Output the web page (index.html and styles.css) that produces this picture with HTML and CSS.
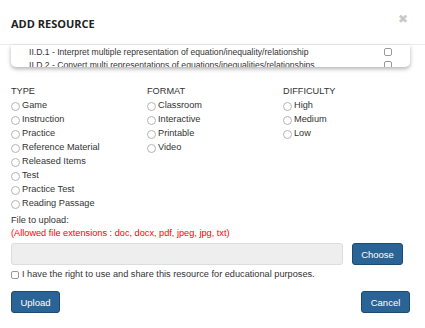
FILE: index.html
```html
<!DOCTYPE html>
<html>

<head>
    <link rel="stylesheet" href="styles.css">
</head>

<body>
    <div class="modal">
        <div class="modal-header">
            <span class="title">ADD RESOURCE</span>
            <span class="close">&#x2716;</span>
        </div>

        <div class="standards">
            <div class="std-row">
                <span>II.D.1 - Interpret multiple representation of equation/inequality/relationship</span>
                <input type="checkbox" class="box">
            </div>
            <div class="std-row">
                <span>II.D.2 - Convert multi representations of equations/inequalities/relationships</span>
                <input type="checkbox" class="box">
            </div>
        </div>

        <div class="options">
            <div class="col">
                <div class="col-title">TYPE</div>
                <label class="opt"><input type="radio" name="type">Game</label>
                <label class="opt"><input type="radio" name="type">Instruction</label>
                <label class="opt"><input type="radio" name="type">Practice</label>
                <label class="opt"><input type="radio" name="type">Reference Material</label>
                <label class="opt"><input type="radio" name="type">Released Items</label>
                <label class="opt"><input type="radio" name="type">Test</label>
                <label class="opt"><input type="radio" name="type">Practice Test</label>
                <label class="opt"><input type="radio" name="type">Reading Passage</label>
            </div>
            <div class="col">
                <div class="col-title">FORMAT</div>
                <label class="opt"><input type="radio" name="format">Classroom</label>
                <label class="opt"><input type="radio" name="format">Interactive</label>
                <label class="opt"><input type="radio" name="format">Printable</label>
                <label class="opt"><input type="radio" name="format">Video</label>
            </div>
            <div class="col">
                <div class="col-title">DIFFICULTY</div>
                <label class="opt"><input type="radio" name="level">High</label>
                <label class="opt"><input type="radio" name="level">Medium</label>
                <label class="opt"><input type="radio" name="level">Low</label>
            </div>
        </div>

        <div class="upload">
            <div class="line">File to upload:</div>
            <div class="line allowed">(Allowed file extensions : doc, docx, pdf, jpeg, jpg, txt)</div>
            <div class="file-row">
                <div class="file-box"></div>
                <button class="button choose">Choose</button>
            </div>
            <label class="rights"><input type="checkbox" class="box">I have the right to use and share this resource for educational purposes.</label>
        </div>

        <div class="footer">
            <button class="button">Upload</button>
            <button class="button">Cancel</button>
        </div>
    </div>
</body>

</html>
```

FILE: styles.css
```css
body {
    margin: 0;
    background: #fff;
    font-family: "Liberation Sans", Arial, sans-serif;
    font-size: 9.2px;
    color: #333;
}

.modal {
    width: 425px;
    height: 328px;
}

.modal-header {
    height: 44px;
    border-bottom: 1px solid #ececec;
    display: flex;
    align-items: center;
    justify-content: space-between;
    padding: 0 17px 0 11px;
}

.title {
    font-family: "Open Sans", sans-serif;
    font-weight: bold;
    font-size: 11px;
    color: #222;
    margin-top: 3px;
}

.close {
    color: #c8c8c8;
    font-size: 12px;
    margin-top: -7px;
}

/* standards list, scrolled */
.standards {
    margin: 0 15px 0 11px;
    height: 22px;
    overflow: hidden;
    border-radius: 0 0 5px 5px;
    box-shadow: 0 2px 4px rgba(0, 0, 0, 0.3);
    padding: 0 18px;
    font-size: 8.6px;
}

.std-row {
    height: 12px;
    display: flex;
    align-items: center;
    justify-content: space-between;
    margin-top: 1px;
}

.box {
    -webkit-appearance: none;
    appearance: none;
    width: 8px;
    height: 8px;
    margin: 0;
    border: 1px solid #999;
    border-radius: 2px;
    background: #fff;
}

.options {
    display: grid;
    grid-template-columns: 136px 136px 136px;
    padding: 0 11px;
    margin-top: 17px;
}

.col-title,
.opt {
    height: 14px;
    line-height: 14px;
    display: flex;
    align-items: center;
}

.opt input {
    -webkit-appearance: none;
    appearance: none;
    width: 9px;
    height: 9px;
    margin: 2px 2px 0 0;
    border: 1px solid #b5b5b5;
    border-radius: 50%;
    background: #fff;
}

.upload {
    padding: 0 11px;
    margin-top: 4px;
}

.line {
    line-height: 13px;
}

.allowed {
    color: #f00;
}

.file-row {
    display: flex;
    gap: 9px;
    margin-top: 3px;
}

.file-box {
    width: 330px;
    height: 20px;
    background: #eee;
    border: 1px solid #ddd;
    border-radius: 3px;
}

.button {
    font-family: "Liberation Sans", Arial, sans-serif;
    font-size: 9.5px;
    color: #fff;
    background: #2a6496;
    border: 1px solid #1b4a72;
    border-radius: 3px;
    height: 22px;
    padding: 0 8px;
    cursor: pointer;
}

.choose {
    width: 51px;
}

.rights {
    display: flex;
    align-items: center;
    height: 14px;
    margin-top: 2px;
}

.rights .box {
    margin-right: 3px;
    margin-top: 2px;
}

.footer {
    display: flex;
    justify-content: space-between;
    padding: 0 15px 0 11px;
    margin-top: 10px;
}

.footer .button {
    width: 49px;
}
```
